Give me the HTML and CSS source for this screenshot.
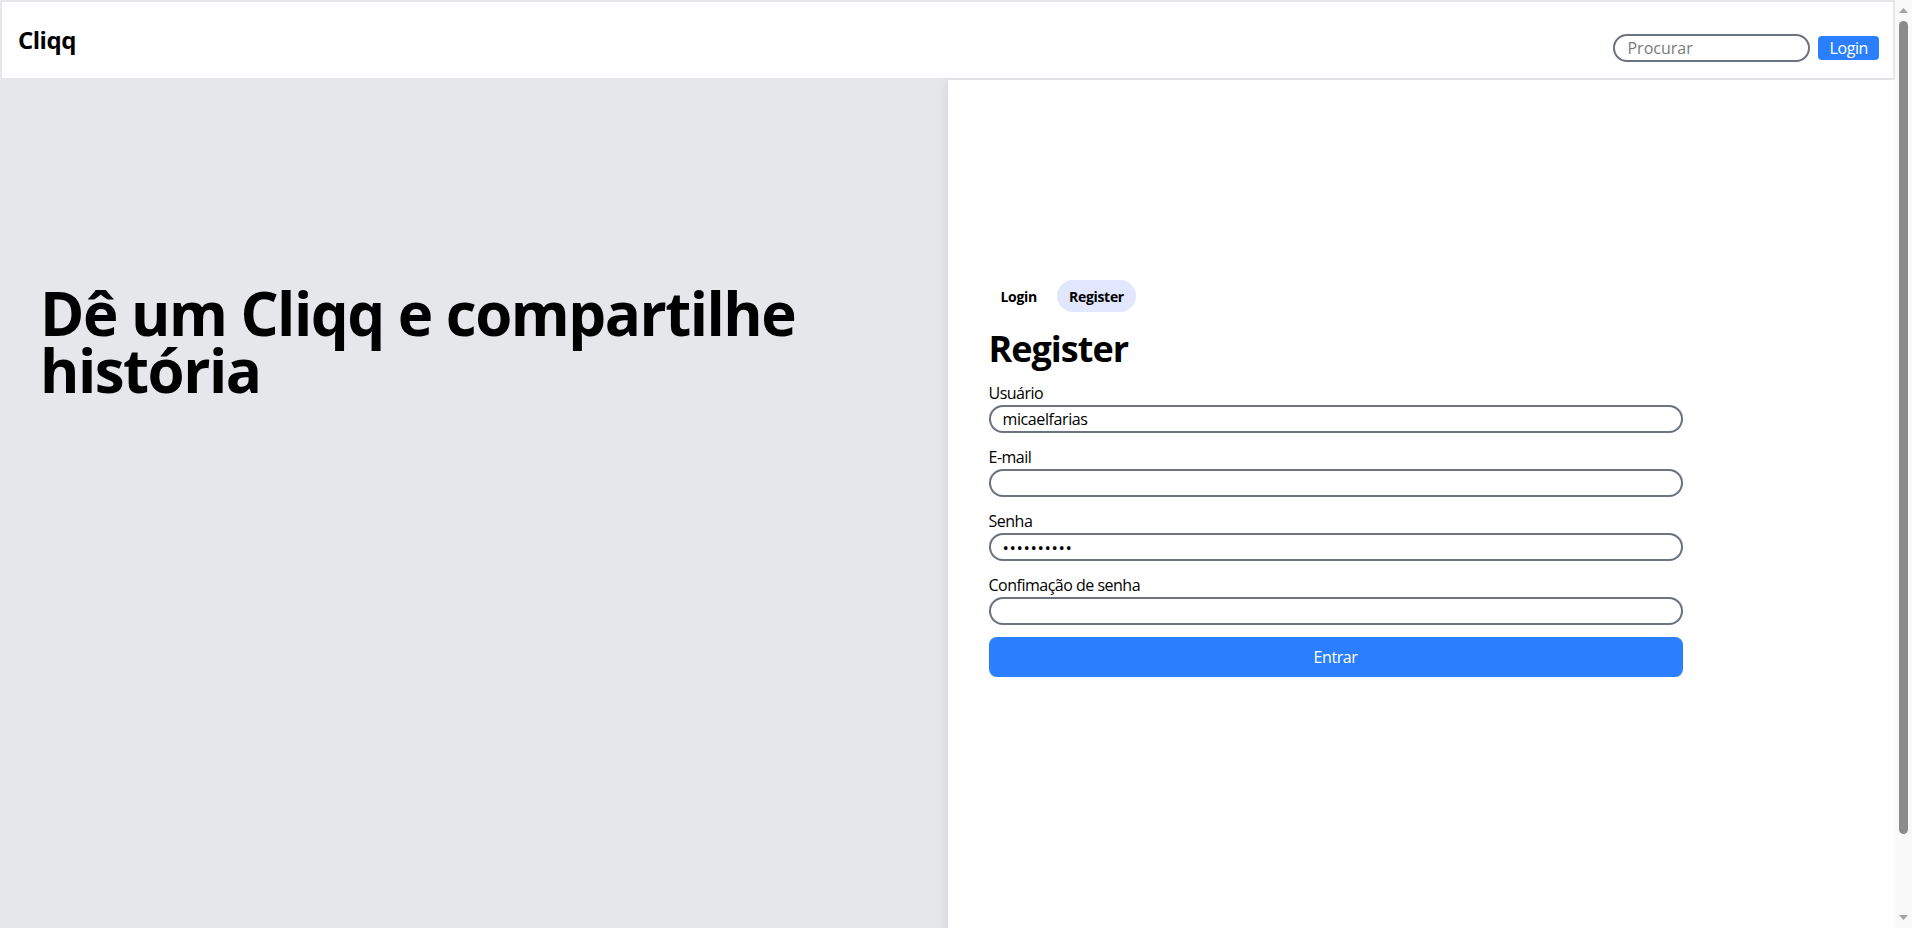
FILE: index.html
```html
<!DOCTYPE html>
<html lang="pt-BR">
<head>
<meta charset="utf-8">
<title>Cliqq</title>
<link rel="stylesheet" href="styles.css">
</head>
<body>
<header class="topbar">
  <span class="brand">Cliqq</span>
  <div class="top-actions">
    <input class="search" type="text" placeholder="Procurar">
    <button class="btn-top">Login</button>
  </div>
</header>
<main class="split">
  <section class="hero">
    <h1 class="hero-title">Dê um Cliqq e compartilhe história</h1>
  </section>
  <section class="auth">
    <form class="auth-form">
      <div class="tabs">
        <button type="button" class="tab">Login</button>
        <button type="button" class="tab tab-active">Register</button>
      </div>
      <h2 class="form-title">Register</h2>
      <div class="field">
        <label class="field-label">Usuário</label>
        <input class="field-input" type="text" value="micaelfarias">
      </div>
      <div class="field">
        <label class="field-label">E-mail</label>
        <input class="field-input" type="email" value="">
      </div>
      <div class="field">
        <label class="field-label">Senha</label>
        <input class="field-input field-secret" type="password" value="1234567890">
      </div>
      <div class="field">
        <label class="field-label">Confimação de senha</label>
        <input class="field-input field-secret" type="password" value="">
      </div>
      <button type="button" class="submit">Entrar</button>
    </form>
  </section>
</main>
<div class="scrollbar" aria-hidden="true">
  <svg class="sb-arrow" width="17" height="17" viewBox="0 0 17 17"><polygon points="4,13 8.5,8 13,13" fill="#a3a3a3"/></svg>
  <div class="sb-track"><div class="sb-thumb"></div></div>
  <svg class="sb-arrow" width="17" height="17" viewBox="0 0 17 17"><polygon points="4,4 8.5,9 13,4" fill="#a3a3a3"/></svg>
</div>
</body>
</html>
```

FILE: styles.css
```css
* {
  box-sizing: border-box;
}

html, body {
  margin: 0;
  padding: 0;
}

body {
  font-family: "Open Sans", "Noto Sans", sans-serif;
  color: #000;
  background: #fff;
  padding-right: 17px;
}

/* imitation of the browser's vertical scrollbar */
.scrollbar {
  position: fixed;
  top: 0;
  right: 0;
  width: 17px;
  height: 100vh;
  background: #f9f9f9;
  display: flex;
  flex-direction: column;
}

.sb-arrow {
  display: block;
  flex: none;
}

.sb-track {
  flex: 1;
  padding: 4px 4px 77px 4px;
}

.sb-thumb {
  width: 9px;
  height: 100%;
  background: #8b8b8b;
  border-radius: 5px;
}

.topbar {
  height: 80px;
  border: 2px solid #e5e7eb;
  background: #fff;
  display: flex;
  justify-content: space-between;
  align-items: center;
  padding: 0 14px 0 16px;
}

.brand {
  font-size: 24px;
  font-weight: 700;
  line-height: 32px;
  letter-spacing: -0.5px;
  margin-bottom: 1px;
}

.top-actions {
  display: flex;
  align-items: center;
  gap: 8px;
  margin-top: 16px;
}

.search {
  width: 197px;
  height: 28px;
  border: 2px solid #6b7280;
  border-radius: 9999px;
  padding: 0 12px;
  font-family: inherit;
  font-size: 16px;
  outline: none;
}

.search::placeholder {
  color: #7a7a7a;
}

.btn-top {
  height: 24px;
  padding: 0 11px;
  border: none;
  border-radius: 4px;
  background: #2b7fff;
  color: #fff;
  font-family: inherit;
  font-size: 16px;
  line-height: 24px;
  letter-spacing: -0.4px;
}

.split {
  display: grid;
  grid-template-columns: 1fr 1fr;
  min-height: 100vh;
}

.hero {
  background: #e5e7eb;
  padding: 205px 40px 40px;
}

.hero-title {
  margin: 0;
  font-size: 60px;
  font-weight: 700;
  line-height: 57px;
  letter-spacing: -1.5px;
}

.auth {
  background: #fff;
  box-shadow: -3px 0 10px rgba(0, 0, 0, 0.05);
  padding: 200px 41px 40px;
}

.auth-form {
  width: 694px;
  display: flex;
  flex-direction: column;
  gap: 12px;
}

.tabs {
  display: flex;
  gap: 8px;
  margin-bottom: 5px;
}

.tab {
  height: 32px;
  padding: 0 12px;
  border: none;
  border-radius: 9999px;
  background: transparent;
  font-family: inherit;
  font-size: 14px;
  font-weight: 700;
  color: #000;
  letter-spacing: -0.3px;
}

.tab-active {
  background: #e0e7ff;
}

.form-title {
  margin: 0;
  font-size: 36px;
  font-weight: 700;
  line-height: 40px;
  letter-spacing: -1px;
}

.field {
  display: flex;
  flex-direction: column;
}

.field-label {
  font-size: 16px;
  line-height: 24px;
  letter-spacing: -0.5px;
}

.field-input {
  width: 100%;
  height: 28px;
  border: 2px solid #6b7280;
  border-radius: 9999px;
  padding: 0 12px;
  font-family: inherit;
  font-size: 16px;
  color: #000;
  outline: none;
  letter-spacing: -0.4px;
}

.field-secret {
  letter-spacing: 0.6px;
  font-size: 17px;
}

.submit {
  height: 40px;
  border: none;
  border-radius: 8px;
  background: #2b7fff;
  color: #fff;
  font-family: inherit;
  font-size: 16px;
  letter-spacing: -0.4px;
}
```
